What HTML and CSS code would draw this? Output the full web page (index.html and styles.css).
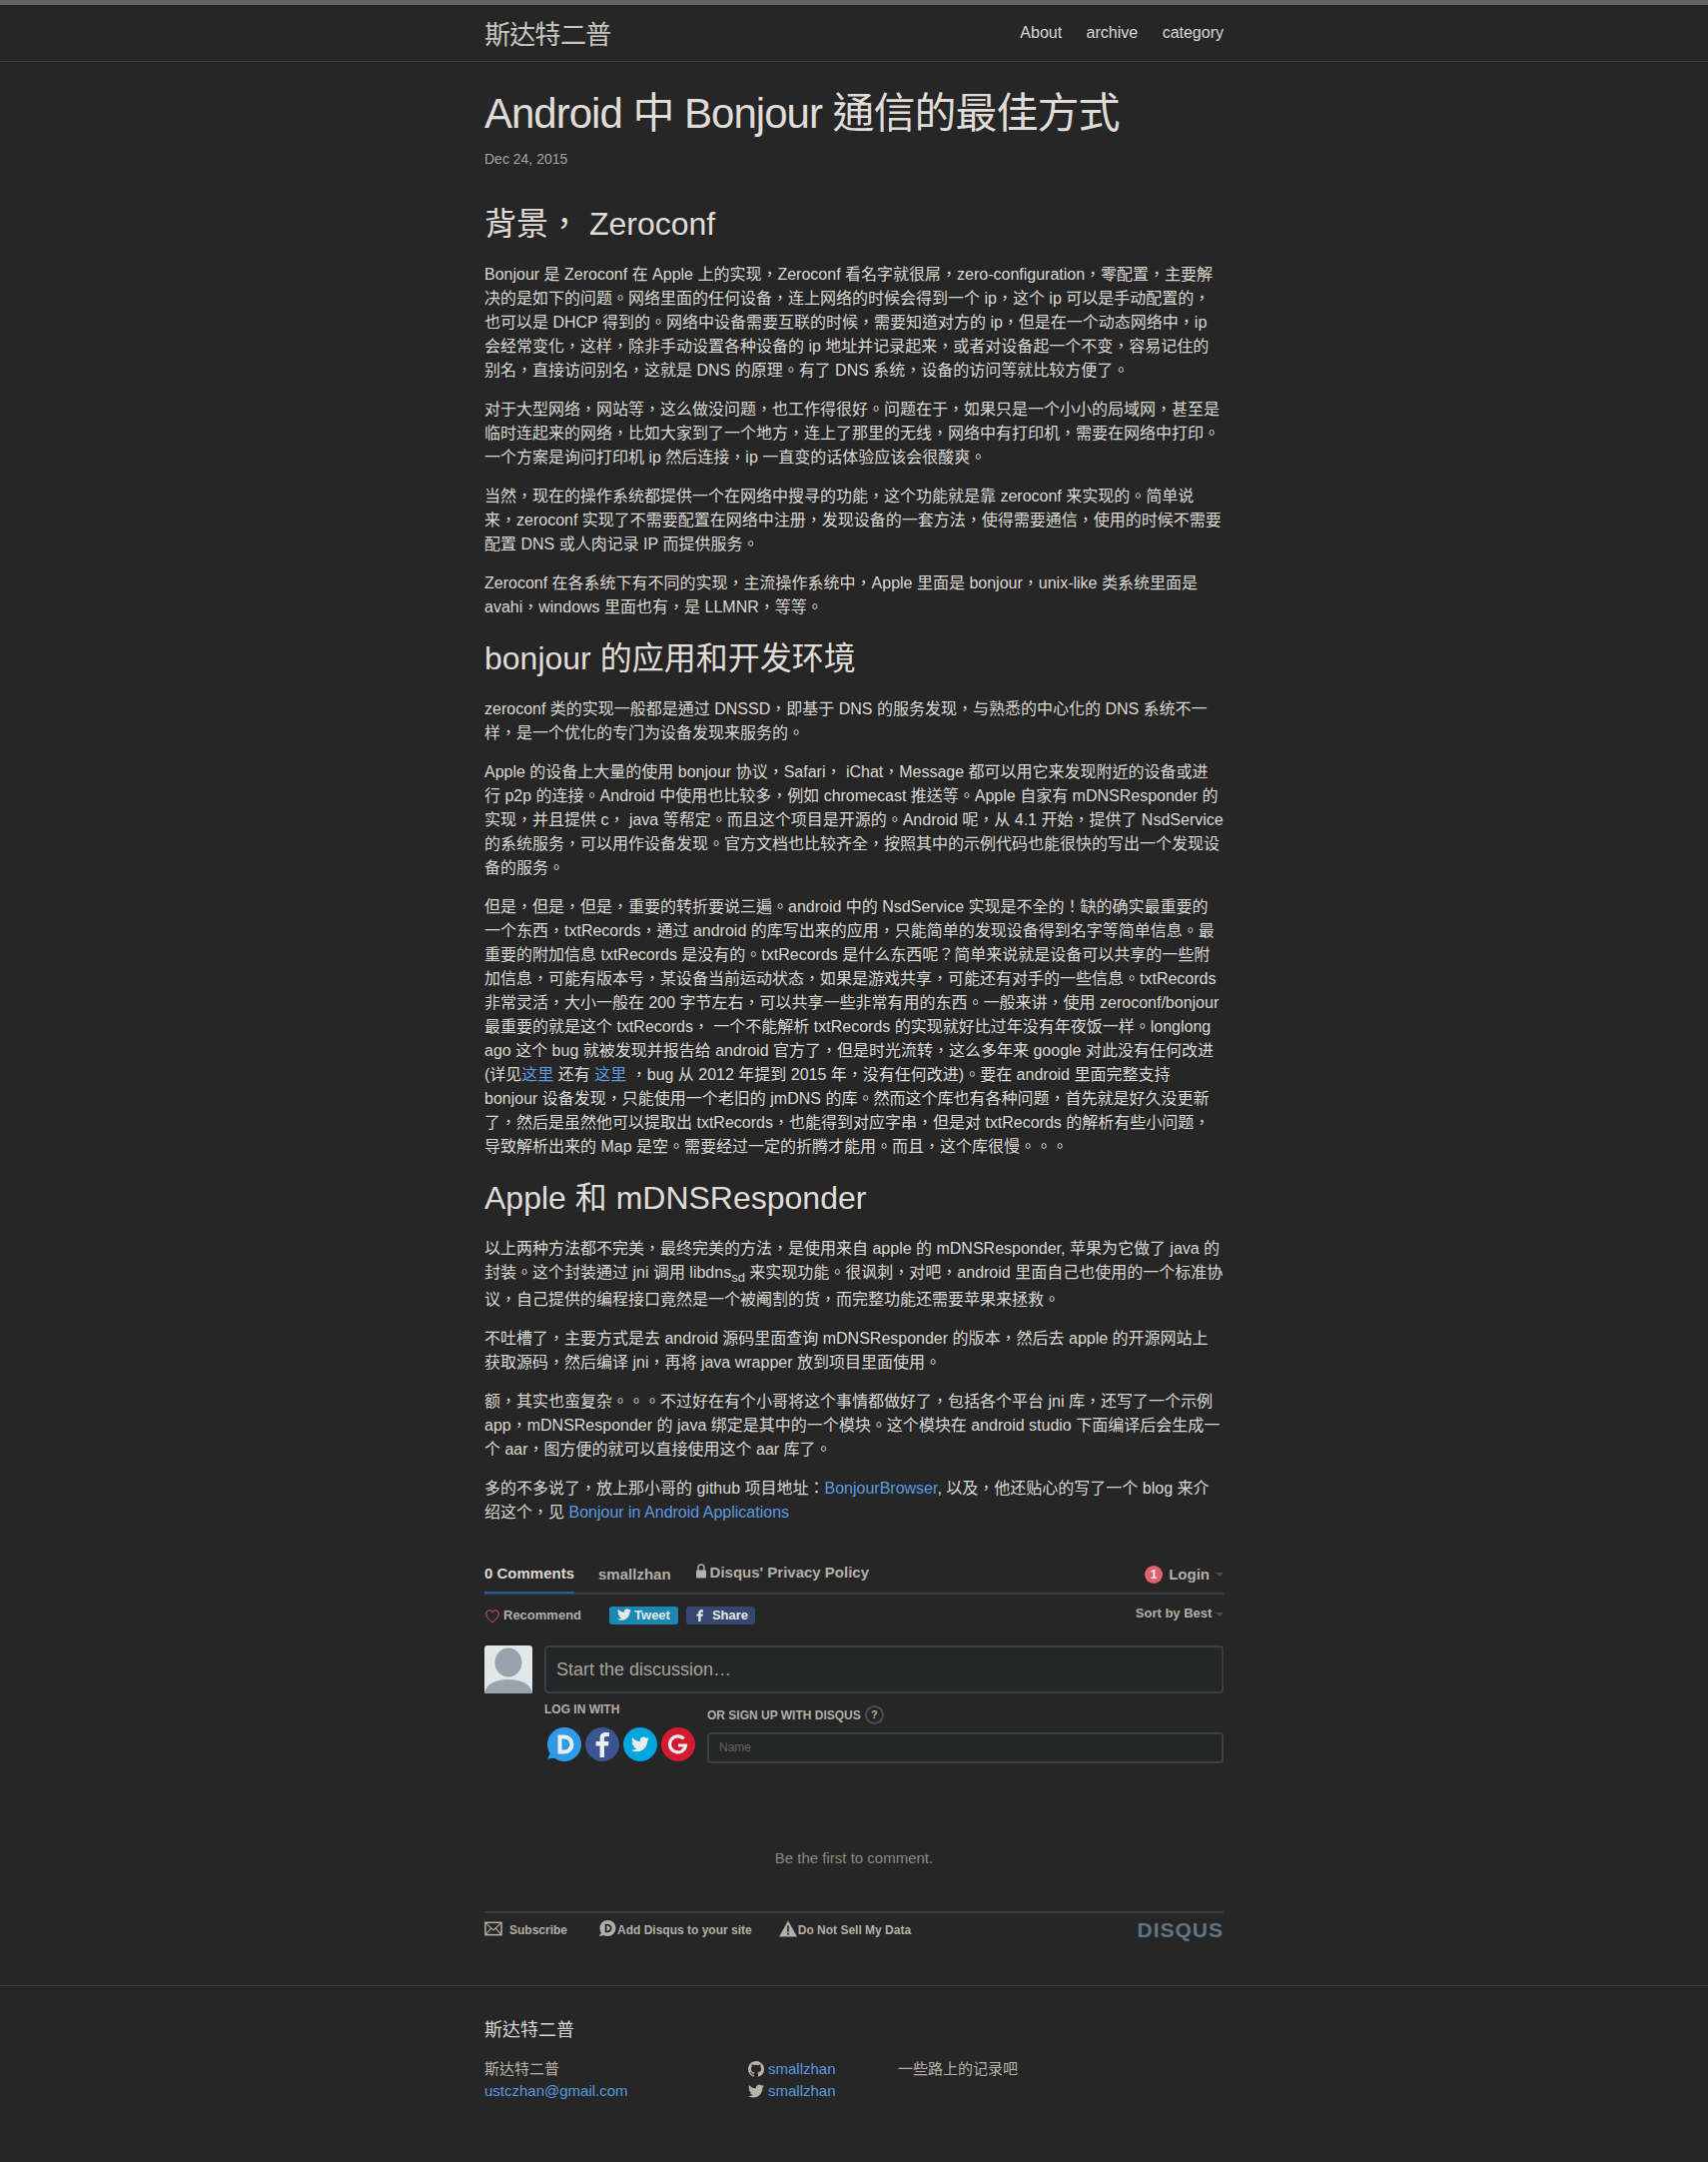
FILE: index.html

```html
<!DOCTYPE html>
<html lang="zh-Hant">

<head>
    <meta charset="UTF-8">
    <meta name="viewport" content="width=device-width, initial-scale=1.0">
    <title>Android 中 Bonjour 通信的最佳方式</title>
    <link rel="stylesheet" href="styles.css">
</head>

<body>
    <header class="site-header">
        <div class="wrapper header-row">
            <a class="site-title" href="#">斯达特二普</a>
            <nav class="site-nav">
                <a href="#">About</a>
                <a href="#">archive</a>
                <a href="#">category</a>
            </nav>
        </div>
    </header>

    <main class="wrapper page-content">
        <h1 class="post-title">Android 中 Bonjour 通信的最佳方式</h1>
        <p class="post-meta">Dec 24, 2015</p>

        <article class="post-content">
            <h2>背景， Zeroconf</h2>
            <p>Bonjour 是 Zeroconf 在 Apple 上的实现，Zeroconf 看名字就很屌，zero-configuration，零配置，主要解决的是如下的问题。网络里面的任何设备，连上网络的时候会得到一个 ip，这个 ip 可以是手动配置的，也可以是 DHCP 得到的。网络中设备需要互联的时候，需要知道对方的 ip，但是在一个动态网络中，ip 会经常变化，这样，除非手动设置各种设备的 ip 地址并记录起来，或者对设备起一个不变，容易记住的别名，直接访问别名，这就是 DNS 的原理。有了 DNS 系统，设备的访问等就比较方便了。</p>
            <p>对于大型网络，网站等，这么做没问题，也工作得很好。问题在于，如果只是一个小小的局域网，甚至是临时连起来的网络，比如大家到了一个地方，连上了那里的无线，网络中有打印机，需要在网络中打印。一个方案是询问打印机 ip 然后连接，ip 一直变的话体验应该会很酸爽。</p>
            <p>当然，现在的操作系统都提供一个在网络中搜寻的功能，这个功能就是靠 zeroconf 来实现的。简单说来，zeroconf 实现了不需要配置在网络中注册，发现设备的一套方法，使得需要通信，使用的时候不需要配置 DNS 或人肉记录 IP 而提供服务。</p>
            <p>Zeroconf 在各系统下有不同的实现，主流操作系统中，Apple 里面是 bonjour，unix-like 类系统里面是 avahi，windows 里面也有，是 LLMNR，等等。</p>

            <h2>bonjour 的应用和开发环境</h2>
            <p>zeroconf 类的实现一般都是通过 DNSSD，即基于 DNS 的服务发现，与熟悉的中心化的 DNS 系统不一样，是一个优化的专门为设备发现来服务的。</p>
            <p>Apple 的设备上大量的使用 bonjour 协议，Safari， iChat，Message 都可以用它来发现附近的设备或进行 p2p 的连接。Android 中使用也比较多，例如 chromecast 推送等。Apple 自家有 mDNSResponder 的实现，并且提供 c， java 等帮定。而且这个项目是开源的。Android 呢，从 4.1 开始，提供了 NsdService 的系统服务，可以用作设备发现。官方文档也比较齐全，按照其中的示例代码也能很快的写出一个发现设备的服务。</p>
            <p>但是，但是，但是，重要的转折要说三遍。android 中的 NsdService 实现是不全的！缺的确实最重要的一个东西，txtRecords，通过 android 的库写出来的应用，只能简单的发现设备得到名字等简单信息。最重要的附加信息 txtRecords 是没有的。txtRecords 是什么东西呢？简单来说就是设备可以共享的一些附加信息，可能有版本号，某设备当前运动状态，如果是游戏共享，可能还有对手的一些信息。txtRecords 非常灵活，大小一般在 200 字节左右，可以共享一些非常有用的东西。一般来讲，使用 zeroconf/bonjour 最重要的就是这个 txtRecords， 一个不能解析 txtRecords 的实现就好比过年没有年夜饭一样。longlong ago 这个 bug 就被发现并报告给 android 官方了，但是时光流转，这么多年来 google 对此没有任何改进 (详见<a href="#">这里</a> 还有 <a href="#">这里</a> ，bug 从 2012 年提到 2015 年，没有任何改进)。要在 android 里面完整支持 bonjour 设备发现，只能使用一个老旧的 jmDNS 的库。然而这个库也有各种问题，首先就是好久没更新了，然后是虽然他可以提取出 txtRecords，也能得到对应字串，但是对 txtRecords 的解析有些小问题，导致解析出来的 Map 是空。需要经过一定的折腾才能用。而且，这个库很慢。。。</p>

            <h2>Apple 和 mDNSResponder</h2>
            <p>以上两种方法都不完美，最终完美的方法，是使用来自 apple 的 mDNSResponder, 苹果为它做了 java 的封装。这个封装通过 jni 调用 libdns<sub>sd</sub> 来实现功能。很讽刺，对吧，android 里面自己也使用的一个标准协议，自己提供的编程接口竟然是一个被阉割的货，而完整功能还需要苹果来拯救。</p>
            <p>不吐槽了，主要方式是去 android 源码里面查询 mDNSResponder 的版本，然后去 apple 的开源网站上获取源码，然后编译 jni，再将 java wrapper 放到项目里面使用。</p>
            <p>额，其实也蛮复杂。。。不过好在有个小哥将这个事情都做好了，包括各个平台 jni 库，还写了一个示例 app，mDNSResponder 的 java 绑定是其中的一个模块。这个模块在 android studio 下面编译后会生成一个 aar，图方便的就可以直接使用这个 aar 库了。</p>
            <p>多的不多说了，放上那小哥的 github 项目地址：<a href="#">BonjourBrowser</a>, 以及，他还贴心的写了一个 blog 来介绍这个，见 <a href="#">Bonjour in Android Applications</a></p>
        </article>

        <section class="disqus">
            <div class="dq-tabs">
                <span class="dq-tab active">0 Comments</span>
                <span class="dq-tab">smallzhan</span>
                <span class="dq-privacy">
                    <svg class="dq-lock" viewBox="0 0 12 15"><path d="M3 7V4a3 3 0 0 1 6 0v3" fill="none" stroke="currentColor" stroke-width="1.4"/><rect x="1" y="6.5" width="10" height="8" rx="1" fill="currentColor"/></svg>
                    Disqus' Privacy Policy
                </span>
                <span class="dq-login">
                    <span class="dq-badge">1</span>
                    Login
                    <span class="dq-caret"></span>
                </span>
            </div>

            <div class="dq-actions">
                <span class="dq-recommend">
                    <svg class="dq-heart" viewBox="0 0 16 15"><path d="M8 13.8C3.5 10.3 1.800 8 1.800 5a3.200 3.200 0 0 1 6.200-1.200A3.200 3.200 0 0 1 14.200 5c0 3-1.700 5.300-6.200 8.800z" fill="none" stroke="#e0596b" stroke-width="1"/></svg>
                    Recommend
                </span>
                <span class="dq-share tweet">
                    <svg viewBox="0 0 24 24"><path fill="currentColor" d="M23.953 4.57a10 10 0 01-2.825.775 4.958 4.958 0 002.163-2.723c-.951.555-2.005.959-3.127 1.184a4.92 4.92 0 00-8.384 4.482C7.69 8.095 4.067 6.13 1.64 3.162a4.822 4.822 0 00-.666 2.475c0 1.71.87 3.213 2.188 4.096a4.904 4.904 0 01-2.228-.616v.06a4.923 4.923 0 003.946 4.827 4.996 4.996 0 01-2.212.085 4.936 4.936 0 004.604 3.417 9.867 9.867 0 01-6.102 2.105c-.39 0-.779-.023-1.17-.067a13.995 13.995 0 007.557 2.209c9.053 0 13.998-7.496 13.998-13.985 0-.21 0-.42-.015-.63A9.935 9.935 0 0024 4.59z"/></svg>
                    Tweet
                </span>
                <span class="dq-share fb">
                    <svg viewBox="0 0 24 24"><path fill="currentColor" d="M14 8h3V4h-3c-2.800 0-5 2.200-5 5v2H6v4h3v9h4v-9h3.500l.5-4h-4V9c0-.6.4-1 1-1z"/></svg>
                    Share
                </span>
                <span class="dq-sort">Sort by Best <span class="dq-caret"></span></span>
            </div>

            <div class="dq-compose">
                <svg class="dq-avatar" viewBox="0 0 48 48">
                    <rect width="48" height="48" rx="3" fill="#e2e7ea"/>
                    <ellipse cx="24" cy="17" rx="13.500" ry="14.500" fill="#99a3ab"/>
                    <path d="M0 48c1-9 11-14 24-14s23 5 24 14z" fill="#99a3ab"/>
                </svg>
                <div class="dq-main">
                    <div class="dq-textarea">Start the discussion…</div>
                    <div class="dq-auth">
                        <div class="dq-login-with">
                            <div class="dq-label">LOG IN WITH</div>
                            <div class="dq-services">
                                <svg class="dq-service" viewBox="0 0 34 34"><circle cx="17" cy="17" r="17" fill="#2e9ae8"/><path d="M4 24 0 31.500l8-1z" fill="#2e9ae8"/><path d="M12.500 9.500h4.500a7.500 7.500 0 0 1 0 15h-4.500z" fill="none" stroke="#e9eef2" stroke-width="4"/></svg>
                                <svg class="dq-service" viewBox="0 0 34 34"><circle cx="17" cy="17" r="17" fill="#3b5592"/><path fill="#e9eef2" d="M19 30V18.500h4l.6-4.500H19v-2.800c0-1.300.4-2.200 2.300-2.200H24V5.200C23.500 5.100 22 5 20.400 5 17 5 14.600 7.100 14.600 10.800V14h-4v4.500h4V30z"/></svg>
                                <svg class="dq-service" viewBox="0 0 34 34"><circle cx="17" cy="17" r="17" fill="#00a6de"/><path fill="#e9eef2" transform="translate(8 8) scale(.75)" d="M23.953 4.570a10 10 0 01-2.825.775 4.958 4.958 0 002.163-2.723c-.951.555-2.005.959-3.127 1.184a4.920 4.920 0 00-8.384 4.482C7.690 8.095 4.067 6.130 1.640 3.162a4.822 4.822 0 00-.666 2.475c0 1.710.870 3.213 2.188 4.096a4.904 4.904 0 01-2.228-.616v.060a4.923 4.923 0 003.946 4.827 4.996 4.996 0 01-2.212.085 4.936 4.936 0 004.604 3.417 9.867 9.867 0 01-6.102 2.105c-.390 0-.779-.023-1.170-.067a13.995 13.995 0 007.557 2.209c9.053 0 13.998-7.496 13.998-13.985 0-.210 0-.420-.015-.630A9.935 9.935 0 0024 4.590z"/></svg>
                                <svg class="dq-service" viewBox="0 0 34 34"><circle cx="17" cy="17" r="17" fill="#d31a2f"/><path d="M22.500 11.500a8 8 0 1 0 2 6.500H17" fill="none" stroke="#e9eef2" stroke-width="3.200"/></svg>
                            </div>
                        </div>
                        <div class="dq-signup">
                            <div class="dq-label">OR SIGN UP WITH DISQUS <span class="dq-help">?</span></div>
                            <div class="dq-input">Name</div>
                        </div>
                    </div>
                </div>
            </div>

            <p class="dq-empty">Be the first to comment.</p>

            <div class="dq-footer">
                <span class="dq-foot-item subscribe">
                    <svg class="dq-foot-icon mail" viewBox="0 0 19 15"><rect x="1" y="1" width="17" height="13" fill="none" stroke="currentColor" stroke-width="1.600"/><path d="M1.500 1.500 9.500 9l8-7.500M1.500 13.500l5.500-6.500M17.500 13.500 12 7" fill="none" stroke="currentColor" stroke-width="1.200"/></svg>
                    Subscribe
                </span>
                <span class="dq-foot-item">
                    <svg class="dq-foot-icon" viewBox="0 0 18 18"><circle cx="9.500" cy="8.500" r="8.500" fill="currentColor"/><path d="M3 13 0 17l6-1z" fill="currentColor"/><path d="M7.500 5h1.800a3.500 3.500 0 0 1 0 7H7.500z" fill="none" stroke="#262626" stroke-width="1.900"/></svg>
                    Add Disqus to your site
                </span>
                <span class="dq-foot-item">
                    <svg class="dq-foot-icon" viewBox="0 0 17 15"><path d="M8.500 0 17 15H0z" fill="currentColor"/><rect x="7.700" y="4.500" width="1.600" height="6" fill="#262626"/><rect x="7.700" y="11.500" width="1.600" height="1.800" fill="#262626"/></svg>
                    Do Not Sell My Data
                </span>
                <span class="dq-logo">DISQUS</span>
            </div>
        </section>
    </main>

    <footer class="site-footer">
        <div class="wrapper">
            <h2 class="footer-heading">斯达特二普</h2>
            <div class="footer-cols">
                <ul class="footer-col col-1">
                    <li>斯达特二普</li>
                    <li><a href="#">ustczhan@gmail.com</a></li>
                </ul>
                <ul class="footer-col col-2">
                    <li>
                        <svg class="social" viewBox="0 0 16 16"><path fill="currentColor" d="M8 0C3.580 0 0 3.580 0 8c0 3.540 2.290 6.530 5.470 7.590.4.070.55-.17.55-.38 0-.19-.01-.82-.01-1.490-2.010.37-2.530-.49-2.690-.94-.09-.23-.48-.94-.82-1.130-.28-.15-.68-.52-.01-.53.63-.01 1.080.58 1.230.82.72 1.210 1.870.87 2.330.66.070-.52.28-.87.51-1.070-1.780-.2-3.640-.89-3.640-3.950 0-.87.31-1.590.82-2.150-.08-.2-.36-1.020.08-2.120 0 0 .67-.21 2.200.82.64-.18 1.320-.27 2-.27.68 0 1.360.09 2 .27 1.530-1.040 2.200-.82 2.200-.82.44 1.100.16 1.920.08 2.120.51.56.82 1.270.82 2.150 0 3.070-1.870 3.750-3.650 3.950.29.25.54.73.54 1.480 0 1.070-.01 1.930-.01 2.200 0 .21.15.46.55.38A8.013 8.013 0 0016 8c0-4.420-3.580-8-8-8z"/></svg>
                        <a href="#">smallzhan</a>
                    </li>
                    <li>
                        <svg class="social" viewBox="0 0 24 24"><path fill="currentColor" d="M23.953 4.570a10 10 0 01-2.825.775 4.958 4.958 0 002.163-2.723c-.951.555-2.005.959-3.127 1.184a4.920 4.920 0 00-8.384 4.482C7.690 8.095 4.067 6.130 1.640 3.162a4.822 4.822 0 00-.666 2.475c0 1.710.870 3.213 2.188 4.096a4.904 4.904 0 01-2.228-.616v.060a4.923 4.923 0 003.946 4.827 4.996 4.996 0 01-2.212.085 4.936 4.936 0 004.604 3.417 9.867 9.867 0 01-6.102 2.105c-.390 0-.779-.023-1.170-.067a13.995 13.995 0 007.557 2.209c9.053 0 13.998-7.496 13.998-13.985 0-.210 0-.420-.015-.630A9.935 9.935 0 0024 4.590z"/></svg>
                        <a href="#">smallzhan</a>
                    </li>
                </ul>
                <p class="footer-col col-3">一些路上的记录吧</p>
            </div>
        </div>
    </footer>
</body>

</html>
```

FILE: styles.css

```css
body {
    margin: 0;
    background-color: #262626;
    color: #dbd8d3;
    font-family: "Liberation Sans", "Noto Sans CJK TC", sans-serif;
    font-size: 16px;
    line-height: 24px;
}

a {
    color: #5a9ae0;
    text-decoration: none;
}

h1,
h2,
p,
ul {
    margin: 0;
    padding: 0;
    font-weight: normal;
}

ul {
    list-style: none;
}

.wrapper {
    width: 740px;
    margin: 0 auto;
}

/* header */
.site-header {
    height: 56px;
    border-top: 5px solid #66645f;
    border-bottom: 1px solid #3e3e3e;
}

.header-row {
    display: flex;
    justify-content: space-between;
    line-height: 56px;
}

.site-title {
    font-size: 26px;
    line-height: 60px;
    letter-spacing: -0.7px;
    color: #c9c6c0;
}

.site-nav a {
    margin-left: 20px;
    color: #dbd8d3;
}

/* post */
.page-content {
    padding: 31px 0 0;
}

.post-title {
    font-size: 42px;
    line-height: 42px;
    letter-spacing: -1px;
    color: #e0ddd8;
}

.post-meta {
    margin-top: 14px;
    font-size: 14px;
    line-height: 21px;
    color: #a8a49c;
}

.post-content {
    margin-top: 30px;
}

.post-content h2 {
    margin-bottom: 15px;
    font-size: 32px;
    line-height: 48px;
    letter-spacing: 0;
    color: #e0ddd8;
}

.post-content p {
    margin-bottom: 15px;
}

.post-content sub {
    font-size: 13px;
    line-height: 20px;
}

/* disqus */
.disqus {
    margin-top: 32px;
    color: #b3afa6;
    font-weight: bold;
}

.dq-tabs {
    display: flex;
    align-items: center;
    height: 36px;
    border-bottom: 2px solid #373c47;
    font-size: 15px;
}

.dq-tab {
    margin-right: 24px;
    height: 36px;
    line-height: 36px;
}

.dq-tab.active {
    color: #dbd8d3;
    border-bottom: 2px solid #245c9e;
}

.dq-privacy {
    display: flex;
    align-items: center;
    gap: 3px;
    margin-top: -4px;
}

.dq-lock {
    width: 12px;
    height: 15px;
    margin-top: -3px;
}

.dq-login {
    display: flex;
    align-items: center;
    margin-left: auto;
    gap: 6px;
}

.dq-badge {
    width: 18px;
    height: 18px;
    border-radius: 50%;
    background-color: #e0616f;
    color: #f2f2f2;
    font-size: 12px;
    line-height: 18px;
    text-align: center;
}

.dq-caret {
    display: inline-block;
    width: 0;
    height: 0;
    border-top: 4px solid #4a4a4a;
    border-left: 4px solid transparent;
    border-right: 4px solid transparent;
    vertical-align: middle;
}

.dq-actions {
    display: flex;
    align-items: center;
    height: 18px;
    margin-top: 12px;
    font-size: 13px;
}

.dq-recommend {
    display: flex;
    align-items: center;
    gap: 3px;
    width: 125px;
}

.dq-heart {
    width: 16px;
    height: 15px;
}

.dq-share {
    display: flex;
    align-items: center;
    justify-content: center;
    gap: 3px;
    width: 69px;
    height: 18px;
    margin-right: 8px;
    border-radius: 3px;
    color: #e8e8e8;
    font-size: 13px;
}

.dq-share svg {
    width: 14px;
    height: 14px;
    margin-top: -3px;
}

.tweet {
    background-color: #1a87b5;
}

.fb {
    gap: 5px;
    background-color: #35476f;
}

.dq-sort {
    margin-left: auto;
    margin-top: -4px;
    font-size: 13px;
}

.dq-compose {
    display: flex;
    gap: 12px;
    margin-top: 21px;
}

.dq-avatar {
    flex: none;
    width: 48px;
    height: 48px;
}

.dq-main {
    flex: 1;
}

.dq-textarea {
    box-sizing: border-box;
    height: 48px;
    padding: 0 10px;
    border: 2px solid #3a3f45;
    border-radius: 4px;
    background-color: #252727;
    color: #a8a49c;
    font-size: 18px;
    font-weight: normal;
    line-height: 44px;
}

.dq-auth {
    display: flex;
    margin-top: 8px;
}

.dq-login-with {
    width: 163px;
}

.dq-label {
    font-size: 12px;
    line-height: 16px;
}

.dq-services {
    display: flex;
    gap: 4px;
    margin-top: 10px;
    padding-left: 3px;
}

.dq-service {
    width: 34px;
    height: 34px;
}

.dq-signup {
    flex: 1;
    padding-top: 4px;
}

.dq-signup .dq-label {
    display: flex;
    align-items: center;
    gap: 4px;
}

.dq-help {
    width: 15px;
    height: 15px;
    border: 2px solid #474d52;
    border-radius: 50%;
    font-size: 11px;
    line-height: 15px;
    text-align: center;
}

.dq-input {
    box-sizing: border-box;
    height: 31px;
    margin-top: 8px;
    padding: 0 10px;
    border: 2px solid #3a4147;
    border-radius: 4px;
    background-color: #252727;
    color: #66645f;
    font-size: 12px;
    font-weight: normal;
    line-height: 27px;
}

.dq-empty {
    margin-top: 83px;
    color: #8b8880;
    font-size: 15px;
    font-weight: normal;
    text-align: center;
}

.dq-footer {
    display: flex;
    align-items: center;
    height: 34px;
    margin-top: 41px;
    padding-top: 0;
    border-top: 2px solid #373c47;
    font-size: 12px;
}

.dq-foot-item {
    display: flex;
    align-items: center;
    gap: 1px;
    margin-right: 27px;
}

.subscribe {
    gap: 7px;
    margin-right: 31px;
}

.dq-foot-icon {
    width: 18px;
    height: 17px;
    margin-top: -4px;
}

.dq-logo {
    margin-left: auto;
    color: #5f7485;
    font-size: 21px;
    font-weight: bold;
    letter-spacing: 1px;
}

/* footer */
.site-footer {
    margin-top: 38px;
    padding: 31px 0 56px;
    border-top: 1px solid #3e3e3e;
}

.footer-heading {
    margin-bottom: 14px;
    font-size: 18px;
    line-height: 27px;
}

.footer-cols {
    display: flex;
    font-size: 15px;
    line-height: 22px;
    color: #b8b4ab;
}

.col-1 {
    width: 264px;
}

.col-2 {
    width: 150px;
}

.col-2 li {
    display: flex;
    align-items: center;
    gap: 4px;
}

.social {
    width: 16px;
    height: 16px;
}
```
